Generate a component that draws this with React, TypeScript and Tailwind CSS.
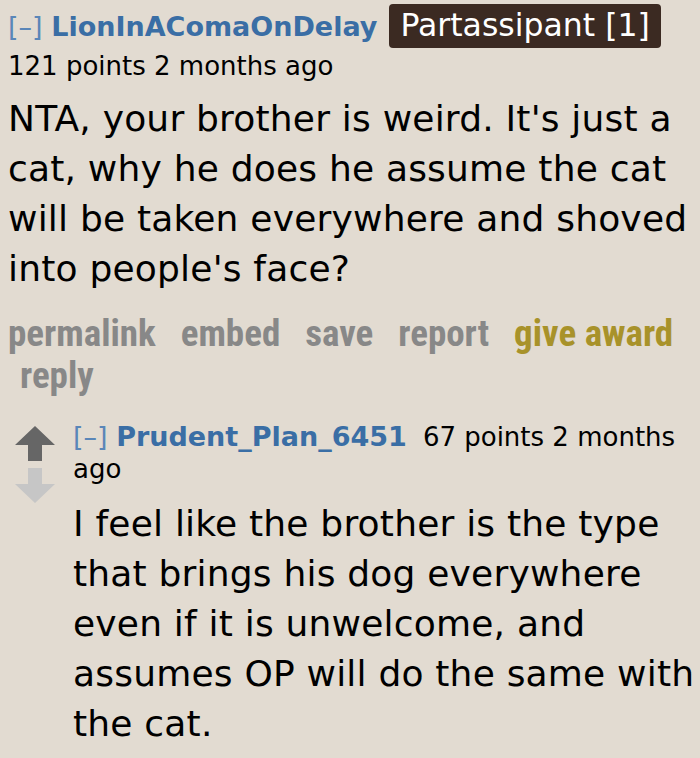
import React from "react";

const body = "font-['DejaVu_Sans','Verdana',sans-serif]";
const links = "font-['Liberation_Sans_Narrow','Roboto_Condensed','Liberation_Sans',sans-serif]";

const Arrow = ({ up, color }: { up?: boolean; color: string }) => (
    <svg width="40" height="35" viewBox="0 0 40 35" className={up ? "" : "rotate-180"}>
        <path d="M20 0 L40 19 L27 19 L27 35 L13 35 L13 19 L0 19 Z" fill={color} />
    </svg>
);

export default function App() {
    return (
        <div className={`w-[700px] h-[758px] overflow-hidden bg-[#e2dbd1] text-black ${body}`}>
            {/* parent comment */}
            <div className="pl-[8px] pt-[4px]">
                <div className="flex items-center gap-[12px] h-[44px]">
                    <span className="text-[27px] leading-none">
                        <span className="text-[#5a86b8]">[–]</span>{" "}
                        <span className="font-bold text-[#3a6ea5]">LionInAComaOnDelay</span>
                    </span>
                    <span className="bg-[#3b2a22] text-white rounded-[4px] px-[11px] h-[44px] flex items-center text-[31.5px] leading-none">
                        Partassipant [1]
                    </span>
                </div>
                <div className="text-[26px] leading-[36px]">121 points 2 months ago</div>
                <div className="text-[36px] tracking-[0.2px] leading-[50px] mt-[10px]">
                    NTA, your brother is weird. It's just a cat, why he does he assume the cat will be taken everywhere and shoved into people's face?
                </div>
                <div className={`${links} font-bold text-[37px] text-[#888888] leading-[42px] mt-[19px] flex flex-wrap gap-x-[25px]`}>
                    <span>permalink</span>
                    <span>embed</span>
                    <span>save</span>
                    <span>report</span>
                    <span className="text-[#a8922a]">give award</span>
                    <span className="pl-[12px]">reply</span>
                </div>
            </div>

            {/* child comment */}
            <div className="flex mt-[24px]">
                <div className="w-[73px] pl-[15px] flex flex-col gap-[7px] pt-[5px]">
                    <Arrow up color="#666666" />
                    <Arrow color="#c6c6c6" />
                </div>
                <div className="flex-1">
                    <div className="leading-[32px] text-[26px]">
                        <span className="text-[27px] text-[#5a86b8]">[–] </span>
                        <span className="text-[27px] font-bold text-[#3a6ea5]">Prudent_Plan_6451</span>
                        <span className="ml-[16px]">67 points 2 months ago</span>
                    </div>
                    <div className="text-[36px] tracking-[0.2px] leading-[50px] mt-[14px]">
                        I feel like the brother is the type that brings his dog everywhere even if it is unwelcome, and assumes OP will do the same with the cat.
                    </div>
                </div>
            </div>
        </div>
    );
}
